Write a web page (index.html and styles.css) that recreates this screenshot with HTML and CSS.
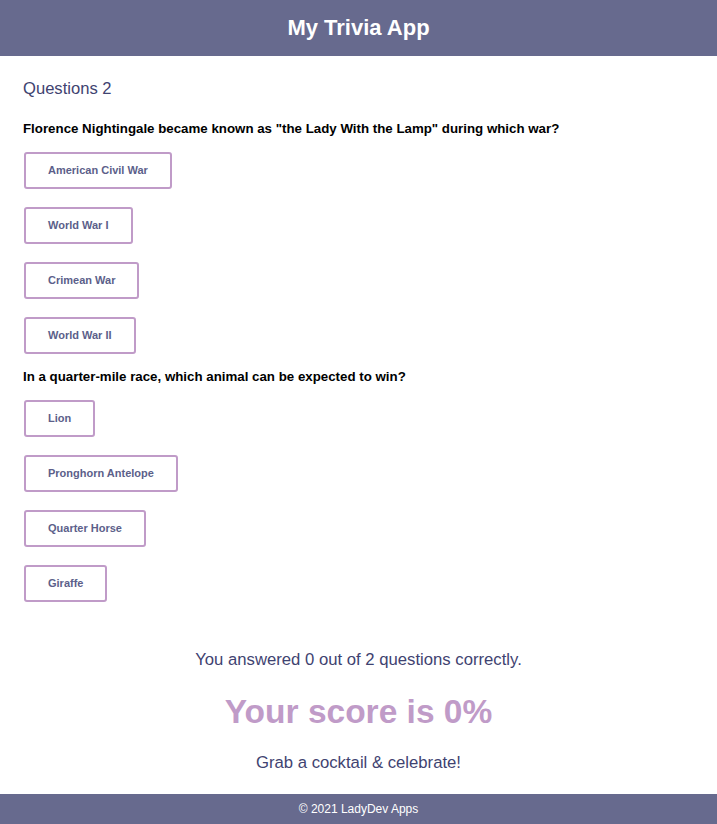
FILE: index.html
```html
<!DOCTYPE html>
<html lang="en">
<head>
<meta charset="utf-8">
<title>My Trivia App</title>
<link rel="stylesheet" href="styles.css">
</head>
<body>
<header class="topbar">
  <h1 class="app-title">My Trivia App</h1>
</header>
<main class="content">
  <h2 class="count">Questions 2</h2>
  <section class="question">
    <p class="q-text">Florence Nightingale became known as "the Lady With the Lamp" during which war?</p>
    <div class="answers">
      <button class="answer">American Civil War</button>
      <button class="answer">World War I</button>
      <button class="answer">Crimean War</button>
      <button class="answer">World War II</button>
    </div>
  </section>
  <section class="question">
    <p class="q-text">In a quarter-mile race, which animal can be expected to win?</p>
    <div class="answers">
      <button class="answer">Lion</button>
      <button class="answer">Pronghorn Antelope</button>
      <button class="answer">Quarter Horse</button>
      <button class="answer">Giraffe</button>
    </div>
  </section>
  <section class="result">
    <p class="result-line result-first">You answered 0 out of 2 questions correctly.</p>
    <p class="score">Your score is 0%</p>
    <p class="result-line result-last">Grab a cocktail &amp; celebrate!</p>
  </section>
</main>
<footer class="bottombar">© 2021 LadyDev Apps</footer>
</body>
</html>
```
FILE: styles.css
```css
html, body {
  margin: 0;
  padding: 0;
}
body {
  font-family: "Liberation Sans", Arial, sans-serif;
  background: #ffffff;
  color: #000;
}
.topbar {
  background: #676a8e;
  height: 56px;
  display: flex;
  align-items: center;
  justify-content: center;
}
.app-title {
  margin: 0;
  color: #ffffff;
  font-size: 22px;
  font-weight: bold;
}
.content {
  padding: 0 23px;
}
.count {
  margin: 0;
  padding-top: 23px;
  font-size: 16.6px;
  font-weight: normal;
  color: #3f4371;
  line-height: 20px;
}
.question {
  display: flex;
  flex-direction: column;
}
.q-text {
  margin: 15px 0 0;
  font-size: 13.3px;
  font-weight: bold;
  line-height: 16px;
}
.count + .question .q-text {
  margin-top: 22px;
}
.answers {
  display: flex;
  flex-direction: column;
  align-items: flex-start;
  gap: 18px;
  margin-top: 15px;
  padding-left: 1px;
}
.answer {
  font-family: "Liberation Sans", Arial, sans-serif;
  font-size: 11px;
  font-weight: bold;
  line-height: 13px;
  color: #5c5f8a;
  background: #ffffff;
  border: 2px solid #c09bc8;
  border-radius: 3px;
  padding: 10px 22px;
}
.result {
  text-align: center;
  padding-top: 28px;
  padding-bottom: 0;
}
.result-line {
  margin: 20px 0;
  font-size: 16.7px;
  color: #3f4371;
  line-height: 20px;
}
.result-first {
  margin: 20px 0 22px;
}
.result-last {
  margin: 21px 0 21px;
}
.score {
  margin: 0;
  font-size: 33.5px;
  font-weight: bold;
  color: #c09bc8;
  line-height: 40px;
}
.bottombar {
  background: #676a8e;
  color: #ffffff;
  font-size: 12px;
  height: 30px;
  display: flex;
  align-items: center;
  justify-content: center;
}
```
